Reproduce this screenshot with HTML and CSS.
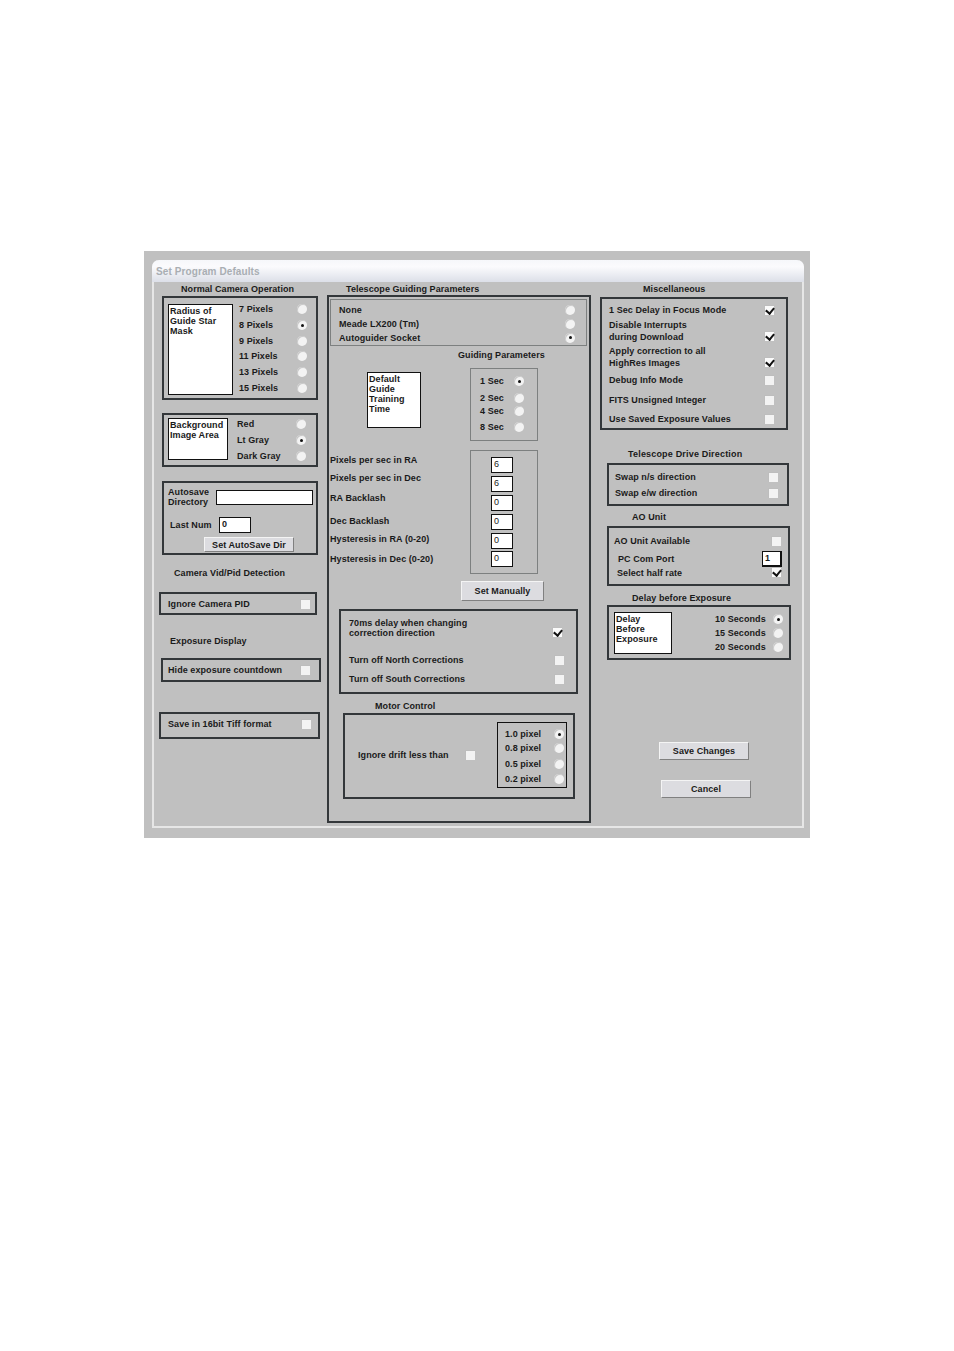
FILE: index.html
```html
<!DOCTYPE html>
<html lang="en">
<head>
  <meta charset="utf-8" />
  <title>Set Program Defaults</title>
  <link rel="stylesheet" href="styles.css">
</head>
<body>
  <div class="window">
    <div class="frame">
      <div class="titlebar">Set Program Defaults</div>
      <div class="columns">

        <div class="col col-left">
          <h3 class="head head-camera">Normal Camera Operation</h3>
          <section class="box box-mask">
            <div class="list list-mask">Radius of<br>Guide Star<br>Mask</div>
            <div class="opts opts-mask">
              <div class="row"><span>7 Pixels</span><i class="radio"></i></div>
              <div class="row"><span>8 Pixels</span><i class="radio on"></i></div>
              <div class="row"><span>9 Pixels</span><i class="radio"></i></div>
              <div class="row"><span>11 Pixels</span><i class="radio"></i></div>
              <div class="row"><span>13 Pixels</span><i class="radio"></i></div>
              <div class="row"><span>15 Pixels</span><i class="radio"></i></div>
            </div>
          </section>
          <section class="box box-bg">
            <div class="list list-bg">Background<br>Image Area</div>
            <div class="opts opts-bg">
              <div class="row"><span>Red</span><i class="radio"></i></div>
              <div class="row"><span>Lt Gray</span><i class="radio on"></i></div>
              <div class="row"><span>Dark Gray</span><i class="radio"></i></div>
            </div>
          </section>
          <section class="box box-autosave">
            <div class="save-dir">
              <div class="save-label">Autosave<br>Directory</div>
              <div class="field field-dir"></div>
            </div>
            <div class="save-num">
              <div class="num-label">Last Num</div>
              <div class="field field-num">0</div>
            </div>
            <button class="btn btn-dir">Set AutoSave Dir</button>
          </section>
          <h3 class="head head-pid">Camera Vid/Pid Detection</h3>
          <section class="box box-pid">
            <div class="row"><span>Ignore Camera PID</span><i class="chk"></i></div>
          </section>
          <h3 class="head head-exp">Exposure Display</h3>
          <section class="box box-hide">
            <div class="row"><span>Hide exposure countdown</span><i class="chk"></i></div>
          </section>
          <section class="box box-tiff">
            <div class="row"><span>Save in 16bit Tiff format</span><i class="chk"></i></div>
          </section>
        </div>

        <div class="col col-mid">
          <h3 class="head head-tele">Telescope Guiding Parameters</h3>
          <section class="box box-guide">
            <div class="thin box-mount">
              <div class="row"><span>None</span><i class="radio"></i></div>
              <div class="row"><span>Meade LX200 (Tm)</span><i class="radio"></i></div>
              <div class="row"><span>Autoguider Socket</span><i class="radio on"></i></div>
            </div>
            <h3 class="head head-params">Guiding Parameters</h3>
            <div class="train">
              <div class="list list-train">Default<br>Guide<br>Training<br>Time</div>
              <div class="thin box-secs">
                <div class="row"><span>1 Sec</span><i class="radio on"></i></div>
                <div class="row"><span>2 Sec</span><i class="radio"></i></div>
                <div class="row"><span>4 Sec</span><i class="radio"></i></div>
                <div class="row"><span>8 Sec</span><i class="radio"></i></div>
              </div>
            </div>
            <div class="rates">
              <div class="rate-labels">
                <div>Pixels per sec in RA</div>
                <div>Pixels per sec in Dec</div>
                <div>RA Backlash</div>
                <div>Dec Backlash</div>
                <div>Hysteresis in RA (0-20)</div>
                <div>Hysteresis in Dec (0-20)</div>
              </div>
              <div class="thin box-rates">
                <div class="field field-rate">6</div>
                <div class="field field-rate">6</div>
                <div class="field field-rate">0</div>
                <div class="field field-rate">0</div>
                <div class="field field-rate">0</div>
                <div class="field field-rate">0</div>
              </div>
            </div>
            <button class="btn btn-manual">Set Manually</button>
            <section class="box box-corr">
              <div class="row row-delay"><span>70ms delay when changing<br>correction direction</span><i class="chk on"></i></div>
              <div class="row"><span>Turn off North Corrections</span><i class="chk"></i></div>
              <div class="row"><span>Turn off South Corrections</span><i class="chk"></i></div>
            </section>
            <h3 class="head head-motor">Motor Control</h3>
            <section class="box box-motor">
              <span class="drift-label">Ignore drift less than</span>
              <i class="chk"></i>
              <div class="drift-opts">
                <div class="row"><span>1.0 pixel</span><i class="radio on"></i></div>
                <div class="row"><span>0.8 pixel</span><i class="radio"></i></div>
                <div class="row"><span>0.5 pixel</span><i class="radio"></i></div>
                <div class="row"><span>0.2 pixel</span><i class="radio"></i></div>
              </div>
            </section>
          </section>
        </div>

        <div class="col col-right">
          <h3 class="head head-misc">Miscellaneous</h3>
          <section class="box box-misc">
            <div class="row"><span>1 Sec Delay in Focus Mode</span><i class="chk on"></i></div>
            <div class="row row-two"><span>Disable Interrupts<br>during Download</span><i class="chk on"></i></div>
            <div class="row row-two"><span>Apply correction to all<br>HighRes Images</span><i class="chk on"></i></div>
            <div class="row"><span>Debug Info Mode</span><i class="chk"></i></div>
            <div class="row"><span>FITS Unsigned Integer</span><i class="chk"></i></div>
            <div class="row"><span>Use Saved Exposure Values</span><i class="chk"></i></div>
          </section>
          <h3 class="head head-drive">Telescope Drive Direction</h3>
          <section class="box box-drive">
            <div class="row"><span>Swap n/s direction</span><i class="chk"></i></div>
            <div class="row"><span>Swap e/w direction</span><i class="chk"></i></div>
          </section>
          <h3 class="head head-ao">AO Unit</h3>
          <section class="box box-ao">
            <div class="row"><span>AO Unit Available</span><i class="chk"></i></div>
            <div class="row row-port"><span>PC Com Port</span><div class="field field-port">1</div></div>
            <div class="row row-half"><span>Select half rate</span><i class="chk on"></i></div>
          </section>
          <h3 class="head head-delay">Delay before Exposure</h3>
          <section class="box box-delay">
            <div class="list list-delay">Delay<br>Before<br>Exposure</div>
            <div class="opts opts-delay">
              <div class="row"><span>10 Seconds</span><i class="radio on"></i></div>
              <div class="row"><span>15 Seconds</span><i class="radio"></i></div>
              <div class="row"><span>20 Seconds</span><i class="radio"></i></div>
            </div>
          </section>
          <button class="btn btn-save">Save Changes</button>
          <button class="btn btn-cancel">Cancel</button>
        </div>

      </div>
    </div>
  </div>
</body>
</html>
```

FILE: styles.css
```css
:root{
  --face:#c0c0c0;
  --edge:#33373a;
  --thin:#7d8080;
  --ink:#1a1a1a;
}

* { box-sizing: border-box; }

body{
  margin:0; height:1351px; background:#fff; color:var(--ink);
  font: bold 9px/10px "Liberation Sans", Arial, sans-serif;
  letter-spacing:.07px;
}

.window{
  position:relative; top:251px; margin-left:144px;
  width:666px; height:587px; padding:9px 0 0 8px;
  background:var(--face);
}
.frame{
  width:652px; height:568px;
  border:2px solid #e6e6e6; border-top:0; border-radius:7px 7px 0 0;
}
.titlebar{
  height:22px; margin:0 -2px; padding:7px 0 0 4px;
  border-radius:7px 7px 0 0;
  background:linear-gradient(#f6f7fa, #fbfbfd 30%, #dcdfe8);
  color:#a9aeb3; font-size:10px; letter-spacing:.1px;
}
.columns{ display:flex; padding-left:5px; }
.col-left{ width:168px; }
.col-mid{ width:264px; }
.col-right{ margin-left:9px; }

.head{ margin:0; font-size:9px; font-weight:bold; line-height:12px; white-space:nowrap; }
.box{ border:2px solid var(--edge); }
.thin{ border:1px solid var(--thin); }

.row{ display:flex; align-items:center; justify-content:space-between; white-space:nowrap; }
.opts{ display:grid; }

.list{ background:#fff; border:1px solid #111; padding:1px; line-height:10px; font-weight:bold; }

.field{ background:#fff; border:1px solid #111; padding:1px 2px; font-size:9px; line-height:11px; }

.radio{
  display:block; flex:none; position:relative; width:10px; height:10px; border-radius:50%;
  background:#f3f3f3; box-shadow:inset 1px 1px 0 #c8c8c8;
}
.radio.on::after{
  content:""; position:absolute; left:3.5px; top:3.5px; width:3px; height:3px; border-radius:50%; background:#111;
}
.chk{
  display:block; flex:none; position:relative; width:10px; height:10px;
  background:#f3f3f3; box-shadow:inset 1px 1px 0 #bdbdbd;
}
.chk.on{ background:#fafafa; }
.chk.on::after{
  content:""; position:absolute; left:3px; top:1px; width:4px; height:6px;
  border:solid #111; border-width:0 2px 2px 0; transform:rotate(40deg);
}

.btn{
  display:block; padding:0; font:inherit; letter-spacing:inherit; color:var(--ink);
  background:#dcdce0;
  border:1px solid; border-color:#f4f4f4 #808080 #808080 #f4f4f4;
}

/* left column */
.head-camera{ margin:1px 0 0 22px; }
.box-mask{ display:flex; width:156px; height:104px; margin:1px 0 0 3px; padding-left:4px; }
.list-mask{ width:65px; height:91px; margin-top:6px; }
.opts-mask{
  width:68px; margin:3px 0 0 6px;
  grid-template-rows:16px 16px 15px 16px 16px 16px;
}
.box-bg{ display:flex; width:156px; height:54px; margin:13px 0 0 3px; padding-left:4px; }
.list-bg{ width:60px; height:42px; margin-top:3px; }
.opts-bg{ width:69px; margin:1px 0 0 9px; grid-template-rows:16px 16px 15px; }
.box-autosave{ width:156px; height:74px; margin:14px 0 0 3px; padding:4px 0 0 4px; }
.save-dir{ display:flex; align-items:center; height:20px; }
.save-label{ width:48px; }
.field-dir{ width:97px; height:15px; }
.save-num{ display:flex; align-items:center; height:16px; margin:10px 0 0 2px; }
.num-label{ width:49px; }
.field-num{ width:32px; height:16px; }
.btn-dir{ width:90px; height:15px; margin:4px 0 0 36px; }
.head-pid{ margin:12px 0 0 15px; }
.box-pid{ width:158px; height:23px; margin-top:13px; padding:0 5px 0 7px; }
.box-pid .row, .box-hide .row, .box-tiff .row{ height:100%; }
.head-exp{ margin:20px 0 0 11px; }
.box-hide{ width:160px; height:24px; margin:11px 0 0 2px; padding:0 9px 0 5px; }
.box-tiff{ width:161px; height:27px; margin-top:30px; padding:0 7px 3px 7px; }

/* middle column */
.head-tele{ margin:1px 0 0 19px; height:12px; }
.box-guide{ width:264px; height:528px; }
.box-mount{
  display:grid; grid-template-rows:14px 14px 13px;
  width:257px; height:47px; margin:2px 0 0 1px; padding:3px 11px 0 8px;
}
.head-params{ margin:3px 0 0 129px; }
.train{ display:flex; align-items:flex-start; margin-left:38px; }
.list-train{ width:54px; height:56px; margin-top:11px; }
.box-secs{
  display:grid; grid-template-rows:22px 12px 14px 18px;
  width:68px; height:73px; margin:7px 0 0 49px; padding:1px 13px 0 9px;
}
.rates{ display:flex; margin:9px 0 0 1px; }
.rate-labels{
  display:grid; grid-template-rows:20px 16px 24px 22px 14px 26px; align-items:center;
  width:140px; white-space:nowrap;
}
.box-rates{
  display:grid; grid-template-rows:19px 19px 19px 19px 18px 16px;
  width:68px; height:124px; padding:6px 0 0 20px;
}
.field-rate{ width:22px; height:16px; font-weight:normal; }
.btn-manual{ width:83px; height:20px; margin:7px 0 0 132px; }
.box-corr{
  display:grid; grid-template-rows:38px 22px 16px;
  width:239px; height:85px; margin:8px 0 0 10px; padding:0 12px 0 8px;
}
.row-delay span{ margin-top:-4px; }
.row-delay .chk{ margin:4px 2px 0 0; }
.head-motor{ margin:6px 0 0 46px; }
.box-motor{
  display:flex; align-items:center;
  width:232px; height:86px; margin:1px 0 0 14px; padding:0 0 2px 13px;
}
.drift-label{ width:107px; white-space:nowrap; }
.drift-opts{
  display:grid; grid-template-rows:14px 14px 18px 12px;
  width:70px; height:66px; margin-left:22px; padding:4px 2px 0 7px;
  border:1px solid #111;
}

/* right column */
.head-misc{ margin:1px 0 0 43px; }
.box-misc{
  display:grid; grid-template-rows:18px 26px 24px 22px 18px 20px;
  width:188px; height:133px; margin-top:2px; padding:2px 12px 0 7px;
}
.row-two{ align-items:flex-start; line-height:12px; }
.row-two .chk{ margin-top:12px; }
.head-drive{ margin:18px 0 0 28px; letter-spacing:.18px; }
.box-drive{
  display:grid; grid-template-rows:16px 16px;
  width:182px; height:43px; margin:3px 0 0 7px; padding:4px 9px 0 6px;
}
.head-ao{ margin:5px 0 0 32px; }
.box-ao{
  display:grid; grid-template-rows:24px 12px 16px;
  width:183px; height:60px; margin:3px 0 0 7px; padding:1px 7px 0 5px;
}
.row-port span{ margin-left:4px; }
.row-half span{ margin-left:3px; }
.row-half .chk{ margin-top:-2px; }
.field-port{ width:20px; height:16px; margin-right:-1px; border-width:1px 2px 2px 1px; }
.head-delay{ margin:6px 0 0 32px; }
.box-delay{ display:flex; width:184px; height:55px; margin:1px 0 0 7px; padding-left:5px; }
.list-delay{ width:58px; height:42px; margin-top:5px; }
.opts-delay{
  flex:1; margin:5px 6px 0 43px; align-self:start;
  grid-template-rows:14px 14px 14px;
}
.btn-save{ width:90px; height:18px; margin:82px 0 0 59px; }
.btn-cancel{ width:90px; height:18px; margin:20px 0 0 61px; }
```
